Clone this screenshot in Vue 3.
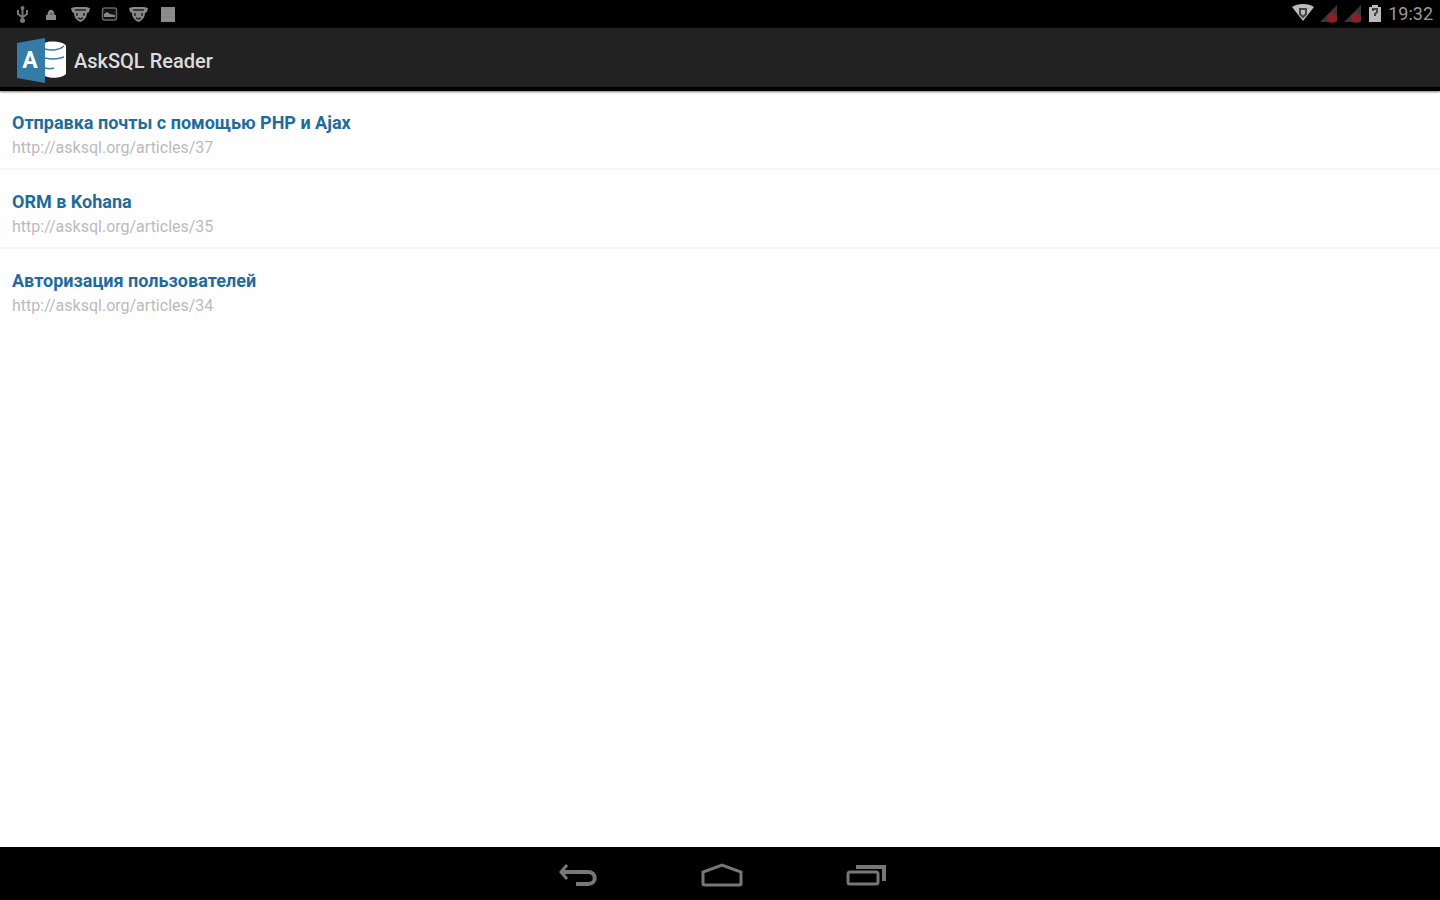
<script setup>
import { ref } from 'vue';

const time = ref('19:32');
const notifications = ['usb', 'lock', 'mask', 'image', 'mask', 'note'];

const articles = ref([
  { id: 37, title: 'Отправка почты с помощью PHP и Ajax' },
  { id: 35, title: 'ORM в Kohana' },
  { id: 34, title: 'Авторизация пользователей' }
]);

const articleUrl = (id) => `http://asksql.org/articles/${id}`;
</script>

<template>
  <div class="screen">
    <div class="status-bar">
      <div class="notifications">
        <svg v-for="(icon, index) in notifications" :key="index" width="29" height="28" viewBox="0 0 29 28">
          <g v-if="icon === 'usb'" fill="none" stroke="#777" stroke-width="2">
            <path d="M14.500 7v14M10 10v4l4 3M19 10v4l-4 3" />
            <circle cx="14.500" cy="20.500" r="1.500" fill="#777" />
            <circle cx="14.500" cy="8" r="1" />
          </g>
          <g v-else-if="icon === 'lock'">
            <path d="M9 20v-5h1.500c0-7 7-7 7 0H19v5z" fill="#888" />
            <path d="M13 14h3" stroke="#444" />
          </g>
          <g v-else-if="icon === 'mask'">
            <path d="M5 8l4-1h11l4 1-1 4-2 1c0 4-2 7-6.500 9C10 20 8 17 8 13l-2-1z" fill="#888" />
            <path d="M9 10h11M11 13v3M18 13v3M12 18l2.500 1 2.500-1" fill="none" stroke="#222" stroke-width="1.500" />
          </g>
          <g v-else-if="icon === 'image'">
            <rect x="7.500" y="8" width="14" height="12" rx="2" fill="#111" stroke="#666" stroke-width="1.500" />
            <path d="M9 17v-3l3-2 3 2 5 1v2z" fill="#888" />
          </g>
          <g v-else>
            <rect x="8" y="7" width="14" height="15" fill="#888" />
            <path d="M8 11h14M8 15h14M8 19h14" stroke="#939393" />
          </g>
        </svg>
      </div>

      <div class="indicators">
        <svg width="22" height="28" viewBox="0 0 22 28">
          <path d="M0 7c5-4 17-4 22 0L11 21z" fill="#bbb" />
          <path d="M7 9h8M8 10v4l3 3 3-3v-4" fill="none" stroke="#444" stroke-width="2" />
        </svg>
        <svg v-for="n in 2" :key="n" class="signal" width="18" height="28" viewBox="0 0 18 28">
          <path d="M0 22L17 5v17z" fill="#383838" />
          <circle cx="12" cy="18" r="5" fill="#8b2029" />
        </svg>
        <svg class="battery" width="12" height="28" viewBox="0 0 12 28">
          <path d="M0 7h3V5h6v2h3v15H0z" fill="#bbb" />
          <path d="M4 11V9h4v3l-2 2v2" fill="none" stroke="#444" stroke-width="2" />
        </svg>
        <span class="time">{{ time }}</span>
      </div>
    </div>

    <header class="action-bar">
      <svg width="50" height="48" viewBox="0 0 50 48" aria-hidden="true">
        <path d="M28 6c5-3 20-1 21 3v28c-3 4-16 5-21 2z" fill="#fff" />
        <path d="M28 12c7 2 15 1 19-3M28 21c8 2 14 1 19-1M28 31c4 1 6 1 9 0" fill="none" stroke="#347ba5" stroke-width="1.500" />
        <path d="M0 6L28 1v45L0 41z" fill="#347ba5" />
        <text x="13" y="31" class="logo-letter">A</text>
      </svg>
      <h1>AskSQL Reader</h1>
    </header>

    <main>
      <ul>
        <li v-for="article in articles" :key="article.id">
          <a :href="articleUrl(article.id)">
            <strong>{{ article.title }}</strong>
            <span>{{ articleUrl(article.id) }}</span>
          </a>
        </li>
      </ul>
    </main>

    <nav class="nav-bar">
      <button type="button" aria-label="Назад">
        <svg width="40" height="26" viewBox="0 0 40 26">
          <path d="M3 9h27c9 0 9 12 0 12H18" fill="none" stroke="#777" stroke-width="4" />
          <path d="M9 2L3 9l6 7" fill="none" stroke="#777" stroke-width="3" />
        </svg>
      </button>
      <button type="button" aria-label="Домой">
        <svg width="44" height="26" viewBox="0 0 44 26">
          <path d="M3 21V9l19-7 19 7v12c0 1-1 1-2 1H5c-1 0-2 0-2-1z" fill="none" stroke="#777" stroke-width="3" />
        </svg>
      </button>
      <button type="button" aria-label="Недавние приложения">
        <svg width="40" height="26" viewBox="0 0 40 26">
          <rect x="2" y="9" width="30" height="12" rx="2" fill="none" stroke="#777" stroke-width="3" />
          <path d="M10 4h28v14" fill="none" stroke="#777" stroke-width="4" />
        </svg>
      </button>
    </nav>
  </div>
</template>

<style>
body {
  margin: 0;
  background: #fefefe;
}
</style>

<style scoped>
.screen {
  display: flex;
  flex-direction: column;
  min-height: 100vh;
  font-family: Roboto, "Noto Sans", sans-serif;
}

.status-bar {
  display: flex;
  justify-content: space-between;
  height: 28px;
  padding: 0 7px 0 8px;
  background: #000;
}

.notifications,
.indicators {
  display: flex;
  align-items: center;
}

.signal {
  margin-left: 6px;
}

.battery {
  margin: 0 7px;
}

.time {
  color: #999;
  font-size: 18px;
  line-height: 28px;
}

.action-bar {
  display: flex;
  align-items: center;
  gap: 7px;
  height: 53px;
  padding: 6px 17px 0;
  background: #222;
  border-bottom: 4px solid #000;
  box-shadow: 0 1px 2px #777;
}

.logo-letter {
  fill: #fff;
  font-size: 23px;
  font-weight: 700;
  text-anchor: middle;
}

h1 {
  margin: 0;
  color: #ddd;
  font-size: 20px;
  font-weight: 500;
}

main {
  flex: 1;
}

ul {
  margin: 0;
  padding: 0;
  list-style: none;
}

li {
  border-bottom: 2px solid #f5f5f5;
}

li:last-child {
  border-bottom: none;
}

a {
  display: block;
  padding: 19px 12px 8px;
  text-decoration: none;
}

strong,
a span {
  display: block;
  line-height: 25px;
}

strong {
  color: #1f6c9c;
  font-size: 18px;
  font-weight: 700;
}

a span {
  color: #bbb;
  font-size: 16px;
}

.nav-bar {
  display: flex;
  justify-content: center;
  gap: 102px;
  height: 49px;
  padding: 4px 0 0 4px;
  background: #000;
}

button {
  display: flex;
  align-items: center;
  padding: 0;
  border: none;
  background: none;
  cursor: pointer;
}
</style>
